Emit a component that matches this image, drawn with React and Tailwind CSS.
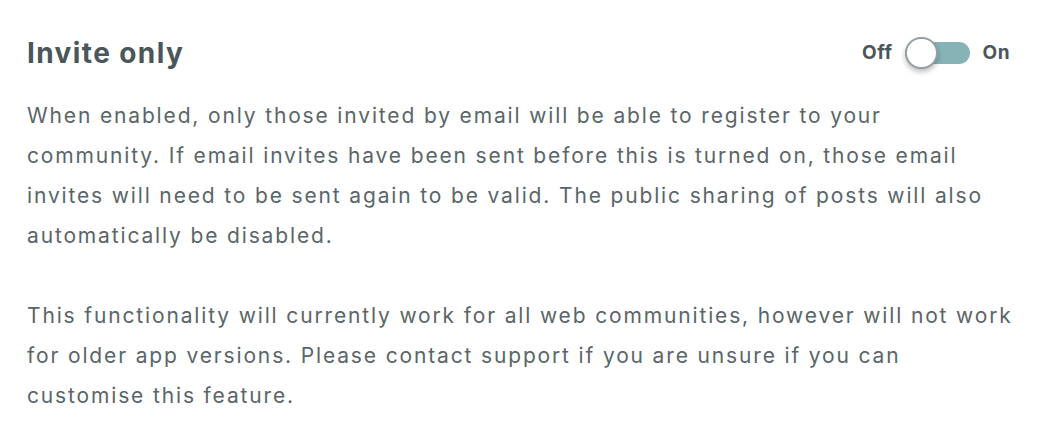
export default function App() {
  return (
    <div className="w-[1050px] h-[448px] bg-white pl-[27px] pr-[40px] pt-[33px] font-['Inter',sans-serif]">
      <div className="flex items-center justify-between h-[40px]">
        <h2 className="text-[28px] font-bold tracking-[1.4px] text-[#4b565b] leading-[40px]">Invite only</h2>
        <div className="flex items-center">
          <span className="text-[19px] font-bold tracking-[0.5px] text-[#4b565b] mr-[12px]">Off</span>
          <div className="relative w-[65px] h-[22px] rounded-full bg-[#86b3b5]">
            <div className="absolute left-0 top-[-5px] w-[33px] h-[32px] rounded-full bg-white border-2 border-[#959ea2] shadow-[0_3px_5px_rgba(0,0,0,0.25)]" />
          </div>
          <span className="text-[19px] font-bold tracking-[0.5px] text-[#4b565b] ml-[13px]">On</span>
        </div>
      </div>
      <div className="mt-[23px] text-[21px] tracking-[1.85px] leading-[40px] text-[#5a6569] whitespace-nowrap">
        <p>When enabled, only those invited by email will be able to register to your<br />community. If email invites have been sent before this is turned on, those email<br />invites will need to be sent again to be valid. The public sharing of posts will also<br />automatically be disabled.</p>
        <p className="mt-[40px]">This functionality will currently work for all web communities, however will not work<br />for older app versions. Please contact support if you are unsure if you can<br />customise this feature.</p>
      </div>
    </div>
  );
}
